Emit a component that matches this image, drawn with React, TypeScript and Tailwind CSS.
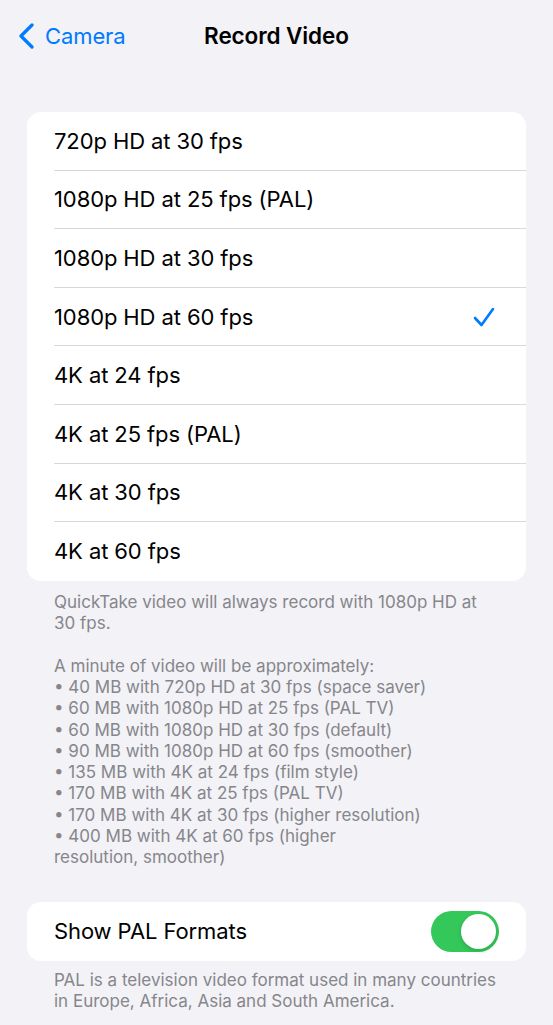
import React from "react";

const options = [
  "720p HD at 30 fps",
  "1080p HD at 25 fps (PAL)",
  "1080p HD at 30 fps",
  "1080p HD at 60 fps",
  "4K at 24 fps",
  "4K at 25 fps (PAL)",
  "4K at 30 fps",
  "4K at 60 fps",
];

const sizes = [
  "• 40 MB with 720p HD at 30 fps (space saver)",
  "• 60 MB with 1080p HD at 25 fps (PAL TV)",
  "• 60 MB with 1080p HD at 30 fps (default)",
  "• 90 MB with 1080p HD at 60 fps (smoother)",
  "• 135 MB with 4K at 24 fps (film style)",
  "• 170 MB with 4K at 25 fps (PAL TV)",
  "• 170 MB with 4K at 30 fps (higher resolution)",
  "• 400 MB with 4K at 60 fps (higher",
  "resolution, smoother)",
];

export default function App() {
  return (
    <div
      className="w-[553px] h-[1025px] overflow-hidden bg-[#f2f2f7]"
      style={{ fontFamily: "Inter, 'Noto Sans', sans-serif" }}
    >
      {/* Nav bar */}
      <div className="relative h-[72px] flex items-center justify-center">
        <div className="absolute left-[18px] top-0 h-[72px] flex items-center gap-[11px] text-[#007aff]">
          <svg width="16" height="26" viewBox="0 0 16 26" fill="none">
            <path d="M14 2 L3 13 L14 24" stroke="#007aff" strokeWidth="3.2" strokeLinecap="round" strokeLinejoin="round" />
          </svg>
          <span className="text-[22px] tracking-[-0.1px]">Camera</span>
        </div>
        <span className="text-[22.5px] font-semibold text-black tracking-[-0.1px]">Record Video</span>
      </div>

      <div className="pt-[40px] px-[27px]">
        <div className="bg-white rounded-[14px] overflow-hidden">
          {options.map((o, i) => (
            <div key={o} className="pl-[27px] h-[58.6px]">
              <div
                className={
                  "h-full flex items-center justify-between pr-[31px] " +
                  (i < options.length - 1 ? "border-b border-[#d8d8dc]" : "")
                }
              >
                <span className="text-[22px] text-black tracking-[-0.1px] pt-[1px]">{o}</span>
                {i === 3 && (
                  <svg width="22" height="20" viewBox="0 0 22 20" fill="none">
                    <path d="M2 11 L8.5 18 L20 2" stroke="#007aff" strokeWidth="2.6" strokeLinecap="round" strokeLinejoin="round" />
                  </svg>
                )}
              </div>
            </div>
          ))}
        </div>

        <div className="px-[27px] pt-[11px] text-[17px] leading-[21.3px] text-[#86868b]">
          <p>QuickTake video will always record with 1080p HD at 30 fps.</p>
          <p className="mt-[21.3px]">A minute of video will be approximately:</p>
          {sizes.map((s) => (
            <p key={s}>{s}</p>
          ))}
        </div>

        <div className="mt-[33px] bg-white rounded-[14px] h-[59px] pl-[27px] pr-[27px] flex items-center justify-between">
          <span className="text-[22px] text-black tracking-[-0.1px]">Show PAL Formats</span>
          <div className="w-[68px] h-[41px] rounded-full bg-[#34c759] flex items-center justify-end p-[3px]">
            <div className="w-[35px] h-[35px] rounded-full bg-white shadow-[0_2px_4px_rgba(0,0,0,0.15)]" />
          </div>
        </div>

        <div className="px-[27px] pt-[9px] text-[17px] leading-[21.3px] text-[#86868b]">
          <p>PAL is a television video format used in many countries in Europe, Africa, Asia and South America.</p>
        </div>
      </div>
    </div>
  );
}
